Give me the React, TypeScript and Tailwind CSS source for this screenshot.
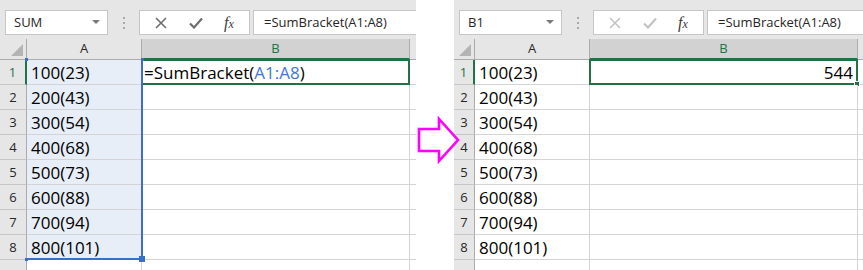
import React from "react";

const FONT = { fontFamily: '"Open Sans", "Liberation Sans", sans-serif' };

const values = ["100(23)", "200(43)", "300(54)", "400(68)", "500(73)", "600(88)", "700(94)", "800(101)"];

function Toolbar({ name, enabled }: { name: string; enabled: boolean }) {
  const ic = enabled ? "#6d6d6d" : "#c3c3c3";
  return (
    <div className="flex h-[45px] items-start bg-[#e6e6e6] pt-[10px]">
      <div className="ml-[5px] flex h-[25px] w-[103px] items-center justify-between border border-[#c6c6c6] bg-white pl-[8px] pr-[7px] text-[13px] text-[#262626]">
        <span>{name}</span>
        <svg width="8" height="5" viewBox="0 0 8 5"><path d="M0 0h8L4 4z" fill="#7a7a7a" /></svg>
      </div>
      <div className="flex h-[25px] w-[31px] flex-col items-center justify-center gap-[3px]">
        <span className="h-[2px] w-[2px] bg-[#a8a8a8]" />
        <span className="h-[2px] w-[2px] bg-[#a8a8a8]" />
        <span className="h-[2px] w-[2px] bg-[#a8a8a8]" />
      </div>
      <div className="flex h-[25px] w-[111px] items-center border border-[#c6c6c6] bg-white">
        <div className="flex w-[42px] justify-center">
          <svg width="12" height="12" viewBox="0 0 12 12"><path d="M1 1L11 11M11 1L1 11" stroke={ic} strokeWidth="1.6" /></svg>
        </div>
        <div className="flex w-[28px] justify-center">
          <svg width="14" height="12" viewBox="0 0 14 12"><path d="M1 6.5L5 10.5L13 1.5" stroke={ic} strokeWidth="2.2" fill="none" /></svg>
        </div>
        <div className="flex w-[38px] justify-center text-[16px] italic leading-none text-[#3c3c3c]" style={{ fontFamily: '"Liberation Serif", serif' }}>
          <span>f<span className="text-[12px]">x</span></span>
        </div>
      </div>
      <div className="ml-[3px] flex h-[25px] flex-1 items-center border border-r-0 border-[#c6c6c6] bg-white pl-[10px] text-[13px] text-[#262626]">
        =SumBracket(A1:A8)
      </div>
    </div>
  );
}

function Panel({ left }: { left: boolean }) {
  const rh = left ? "w-[27px]" : "w-[21px]";
  return (
    <div className={`flex flex-col ${left ? "w-[416px]" : "w-[409px]"} overflow-hidden`} style={FONT}>
      <Toolbar name={left ? "SUM" : "B1"} enabled={left} />
      <div className="flex h-[21px] bg-[#e6e6e6] text-[13px]">
        <div className={`${rh} relative border-r border-b border-[#ababab] bg-[#e6e6e6]`}>
          <svg className="absolute bottom-[3px] right-[3px]" width="12" height="12" viewBox="0 0 12 12"><path d="M12 0V12H0z" fill="#b4b4b4" /></svg>
        </div>
        <div className="flex w-[115px] items-center justify-center border-r border-b border-[#ababab] bg-[#e6e6e6] text-[#262626]">A</div>
        <div className="flex w-[268px] items-center justify-center border-b-2 border-r border-r-[#ababab] border-b-[#217346] bg-[#d2d2d2] text-[#217346]">B</div>
        <div className="flex-1 border-b border-[#ababab] bg-[#e6e6e6]" />
      </div>
      <div className="relative">
        {values.map((v, i) => (
          <div key={i} className="flex h-[25px]">
            <div
              className={`${rh} flex items-end justify-center border-b border-[#c6c6c6] bg-[#e6e6e6] pb-[2px] text-[13px] ${
                i === 0 ? "border-r-2 border-r-[#217346] text-[#217346]" : "border-r border-r-[#ababab] text-[#262626]"
              }`}
            >
              {i + 1}
            </div>
            <div
              className={`flex w-[115px] items-center border-r border-b border-[#d4d4d4] pl-[4px] pt-[2px] text-[17px] text-black ${
                left ? "bg-[#e7eef8]" : "bg-white"
              }`}
            >
              {v}
            </div>
            <div className="relative flex w-[268px] items-center border-r border-b border-[#d4d4d4] bg-white pt-[2px] text-[17px] text-black">
              {i === 0 && left && (
                <span className="pl-[2px]">
                  =SumBracket(<span className="text-[#3c78d8]">A1:A8</span>)
                </span>
              )}
              {i === 0 && !left && <span className="w-full pr-[4px] text-right">544</span>}
              {i === 0 && (
                <div className="absolute -left-[1px] -top-[1px] h-[26px] w-[269px] border-2 border-[#217346]">
                  {!left && <div className="absolute -bottom-[4px] -right-[4px] h-[6px] w-[6px] border border-white bg-[#217346]" />}
                </div>
              )}
            </div>
            <div className="flex-1 border-b border-[#d4d4d4] bg-white" />
          </div>
        ))}
        <div className="flex h-[10px]">
          <div className={`${rh} border-r border-[#ababab] bg-[#e6e6e6]`} />
          <div className="w-[115px] border-r border-[#d4d4d4] bg-white" />
          <div className="w-[268px] border-r border-[#d4d4d4] bg-white" />
          <div className="flex-1 bg-white" />
        </div>
        {left && (
          <div className="pointer-events-none absolute left-[26px] top-[-1px] h-[201px] w-[117px] border-r-2 border-b-2 border-[#3a6fc4]">
            <div className="absolute -left-[1px] -top-[1px] h-[3px] w-[3px] bg-[#3a6fc4]" />
            <div className="absolute -right-[3px] -top-[1px] h-[3px] w-[3px] bg-[#3a6fc4]" />
            <div className="absolute -bottom-[3px] -left-[1px] h-[3px] w-[3px] bg-[#3a6fc4]" />
            <div className="absolute -bottom-[4px] -right-[4px] h-[6px] w-[6px] bg-[#3a6fc4]" />
          </div>
        )}
      </div>
    </div>
  );
}

export default function App() {
  return (
    <div className="relative flex h-[270px] w-[863px] overflow-hidden bg-white">
      <Panel left />
      <div className="w-[38px]" />
      <Panel left={false} />
      <svg className="absolute left-[416px] top-[116px]" width="46" height="48" viewBox="0 0 46 48">
        <path d="M3 13H23V3L42 24L23 45V35H3Z" fill="none" stroke="#ff00ff" strokeWidth="2.6" strokeLinejoin="miter" />
      </svg>
    </div>
  );
}
